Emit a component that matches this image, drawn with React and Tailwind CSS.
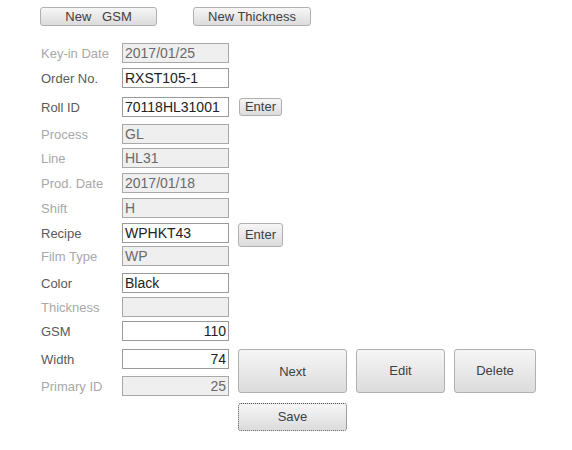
import React from 'react';

const font = { fontFamily: '"Liberation Sans", Arial, sans-serif' };

const Btn = ({ children, className = '' }) => (
  <button
    className={`flex items-center justify-center rounded-[3px] border border-[#b0b0b0] bg-gradient-to-b from-[#f6f6f6] to-[#dcdcdc] text-[13px] text-[#404040] ${className}`}
  >
    {children}
  </button>
);

const Field = ({ label, value, disabled, right, className = '', after }) => (
  <div className={`flex items-center ${className}`}>
    <div className={`w-[81px] text-[13px] leading-none ${disabled ? 'text-[#a8a8a8]' : 'text-[#5a5a5a]'}`}>{label}</div>
    <div
      className={`flex h-[20px] w-[107px] items-center border px-[2px] text-[14px] leading-none ${
        right ? 'justify-end' : ''
      } ${disabled ? 'border-[#a8a8a8] bg-[#efefef] text-[#6a6a6a]' : 'border-[#9a9a9a] bg-white text-[#222]'}`}
    >
      {value}
    </div>
    {after}
  </div>
);

export default function App() {
  return (
    <div className="min-h-[450px] w-[572px] bg-white pt-[7px]" style={font}>
      <div className="flex pl-[40px]">
        <Btn className="h-[19px] w-[117px]">New&nbsp;&nbsp;&nbsp;GSM</Btn>
        <Btn className="ml-[36px] h-[19px] w-[118px]">New Thickness</Btn>
      </div>

      <div className="pl-[41px]">
        <Field className="mt-[17px]" label="Key-in Date" value="2017/01/25" disabled />
        <Field className="mt-[5px]" label="Order No." value="RXST105-1" />
        <Field
          className="mt-[9px]"
          label="Roll ID"
          value="70118HL31001"
          after={<Btn className="ml-[10px] h-[18px] w-[43px]">Enter</Btn>}
        />
        <Field className="mt-[7px]" label="Process" value="GL" disabled />
        <Field className="mt-[4px]" label="Line" value="HL31" disabled />
        <Field className="mt-[5px]" label="Prod. Date" value="2017/01/18" disabled />
        <Field className="mt-[5px]" label="Shift" value="H" disabled />
        <Field
          className="mt-[5px]"
          label="Recipe"
          value="WPHKT43"
          after={<Btn className="ml-[9px] mb-[-4px] h-[24px] w-[45px]">Enter</Btn>}
        />
        <Field className="mt-[3px]" label="Film Type" value="WP" disabled />
        <Field className="mt-[7px]" label="Color" value="Black" />
        <Field className="mt-[4px]" label="Thickness" value="" disabled />
        <Field className="mt-[4px]" label="GSM" value="110" right />

        <div className="mt-[8px] flex items-start">
          <div className="flex flex-col">
            <Field label="Width" value="74" right />
            <Field className="mt-[7px]" label="Primary ID" value="25" disabled right />
          </div>
          <div className="ml-[9px] flex flex-col">
            <div className="flex gap-[9px]">
              <Btn className="h-[44px] w-[109px] pt-[2px]">Next</Btn>
              <Btn className="h-[44px] w-[89px]">Edit</Btn>
              <Btn className="h-[44px] w-[82px]">Delete</Btn>
            </div>
            <button className="mt-[10px] flex h-[28px] w-[109px] items-center justify-center rounded-[3px] border border-dotted border-[#555] bg-gradient-to-b from-[#f6f6f6] to-[#dcdcdc] text-[13px] text-[#404040]">
              Save
            </button>
          </div>
        </div>
      </div>
    </div>
  );
}
